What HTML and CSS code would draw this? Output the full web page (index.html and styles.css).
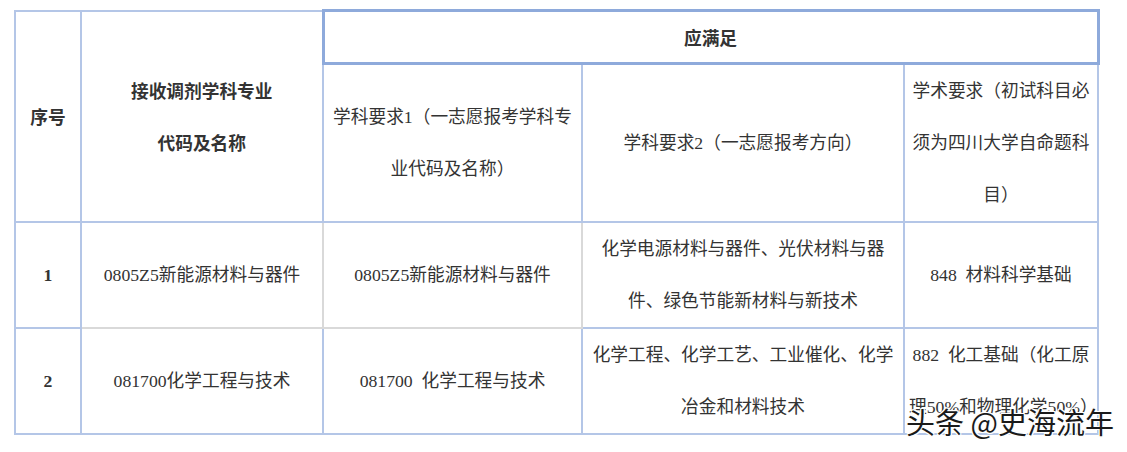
FILE: index.html
```html
<!DOCTYPE html>
<html lang="zh-CN">
<head>
<meta charset="utf-8">
<title>接收调剂学科专业</title>
<link rel="stylesheet" href="styles.css">
</head>
<body>
<div class="page">
  <table class="req-table">
    <colgroup>
      <col class="c1"><col class="c2"><col class="c3"><col class="c4"><col class="c5">
    </colgroup>
    <thead>
      <tr class="row-top">
        <th rowspan="2" class="head">序号</th>
        <th rowspan="2" class="head">接收调剂学科专业<br>代码及名称</th>
        <th colspan="3" class="head group">应满足</th>
      </tr>
      <tr class="row-sub">
        <td class="sub-left">学科要求1（一志愿报考学科专<br>业代码及名称）</td>
        <td>学科要求2（一志愿报考方向）</td>
        <td>学术要求（初试科目必<br>须为四川大学自命题科<br>目）</td>
      </tr>
    </thead>
    <tbody>
      <tr class="row-body row-one">
        <td class="num">1</td>
        <td class="soft">0805Z5新能源材料与器件</td>
        <td class="soft">0805Z5新能源材料与器件</td>
        <td>化学电源材料与器件、光伏材料与器<br>件、绿色节能新材料与新技术</td>
        <td>848&ensp;材料科学基础</td>
      </tr>
      <tr class="row-body">
        <td class="num">2</td>
        <td>081700化学工程与技术</td>
        <td class="thin-left">081700&ensp;化学工程与技术</td>
        <td>化学工程、化学工艺、工业催化、化学<br>冶金和材料技术</td>
        <td>882&ensp;化工基础（化工原<br>理50%和物理化学50%）</td>
      </tr>
    </tbody>
  </table>
  <div class="watermark">头条 @史海流年</div>
</div>
</body>
</html>
```

FILE: styles.css
```css
html, body {
  margin: 0;
  padding: 0;
  background: #ffffff;
}

.page {
  position: relative;
  width: 1127px;
  height: 452px;
  overflow: hidden;
  padding: 9px 0 0 14px;
  box-sizing: border-box;
}

.req-table {
  border-collapse: collapse;
  table-layout: fixed;
  width: 1085px;
  font-family: "Liberation Serif", "Noto Sans CJK SC", serif;
  font-size: 17.7px;
  color: #333333;
}

.c1 { width: 66px; }
.c2 { width: 242px; }
.c3 { width: 259px; }
.c4 { width: 322px; }
.c5 { width: 194px; }

.req-table th,
.req-table td {
  border: 2px solid #b4c6e7;
  padding: 0 4px;
  text-align: center;
  vertical-align: middle;
  white-space: nowrap;
  line-height: 52px;
  font-weight: normal;
}

.req-table .head {
  font-family: "Noto Sans CJK SC", sans-serif;
  font-weight: bold;
}

.req-table .group {
  border: 3px solid #8eaadb;
  line-height: 40px;
}

.req-table .sub-left {
  border-left-width: 1px;
}

.row-top { height: 53px; }
.row-sub { height: 155px; }
.row-body { height: 104px; }

.req-table .num {
  font-weight: bold;
}

.req-table .soft {
  border-right: 2px solid #d9d9d9;
  border-bottom: 2px solid #d9d9d9;
}

.req-table .thin-left {
  border-left-width: 1px;
}

.watermark {
  position: absolute;
  left: 906px;
  top: 403px;
  font-family: "Noto Sans CJK SC", sans-serif;
  font-size: 29px;
  line-height: 36px;
  color: #1a1a1a;
  white-space: nowrap;
  text-shadow:
    1px 0 0 #fff, -1px 0 0 #fff, 0 1px 0 #fff, 0 -1px 0 #fff,
    1px 1px 0 #fff, -1px -1px 0 #fff, 1px -1px 0 #fff, -1px 1px 0 #fff,
    0 0 1px #000;
}
```
